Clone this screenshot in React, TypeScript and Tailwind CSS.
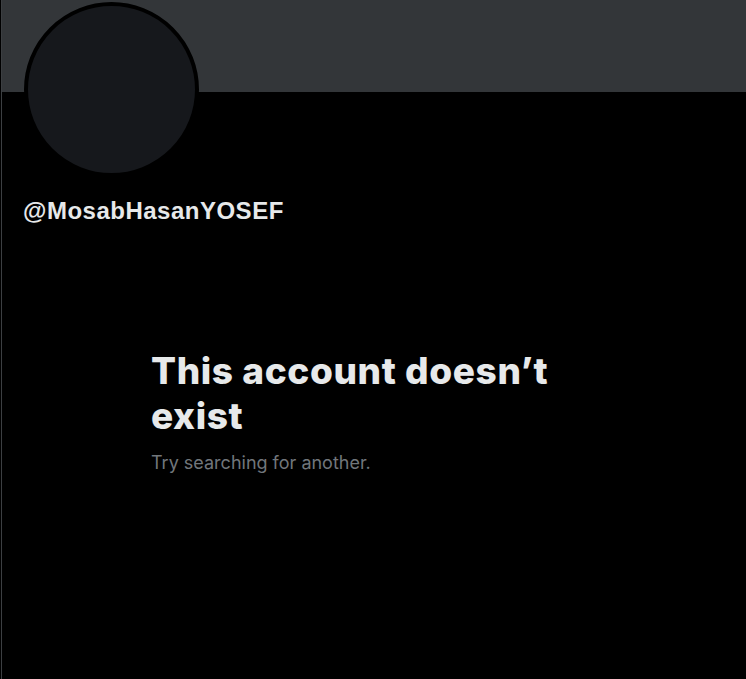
import React from "react";

const App: React.FC = () => {
  return (
    <div className="h-[679px] w-full overflow-hidden bg-black pl-px">
      <div className="flex h-full flex-col border-l border-[#3c3f42]">
        {/* BANNER */}
        <div className="h-[92px] w-full shrink-0 bg-[#333639]" />

        {/* AVATAR */}
        <div className="ml-[22px] mt-[-90px] h-[175px] w-[175px] shrink-0 rounded-full border-4 border-black bg-[#16181c]" />

        {/* HANDLE */}
        <div
          className="ml-[21px] mt-[20px] text-[24px] font-bold leading-[28px] tracking-[0.5px] text-[#e7e9ea]"
          style={{ fontFamily: '"Liberation Sans", Arial, sans-serif' }}
        >
          @MosabHasanYOSEF
        </div>

        {/* EMPTY STATE */}
        <div className="ml-[149px] mt-[123px] flex max-w-[420px] flex-col font-['Inter',sans-serif]">
          <h1 className="text-[37px] font-extrabold leading-[45px] tracking-[0.6px] text-[#e7e9ea]">
            This account doesn’t exist
          </h1>
          <p className="mt-[13px] text-[18px] leading-[24px] text-[#71767b]">Try searching for another.</p>
        </div>
      </div>
    </div>
  );
};

export default App;
